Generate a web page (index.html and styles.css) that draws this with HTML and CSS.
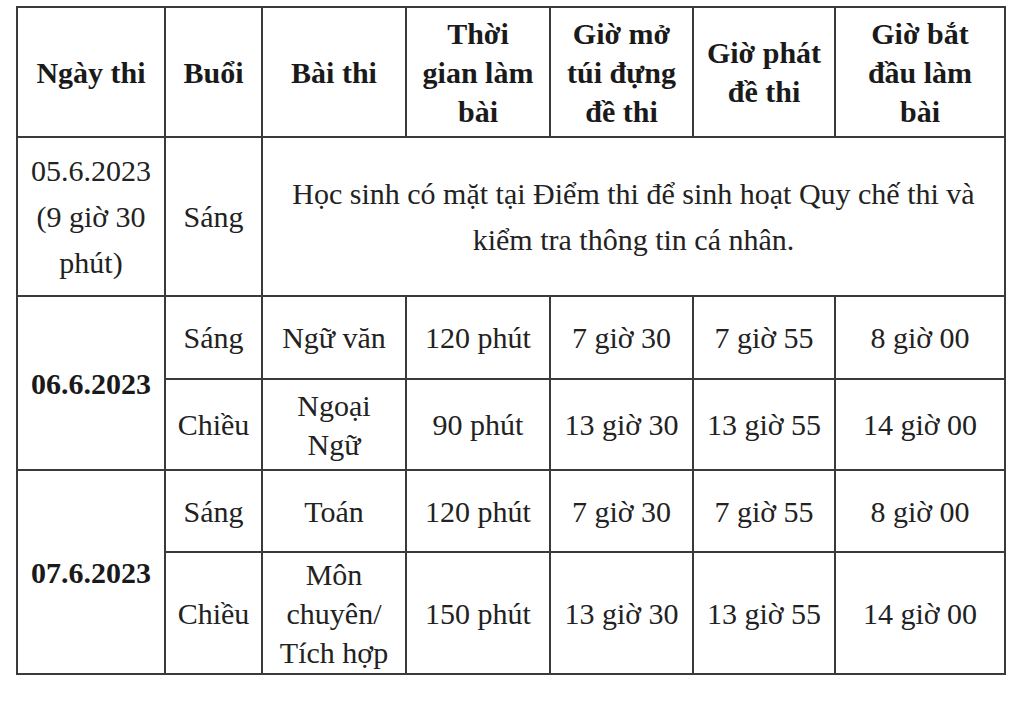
FILE: index.html
```html
<!DOCTYPE html>
<html lang="vi">
<head>
<meta charset="utf-8">
<title>Lịch thi</title>
<link rel="stylesheet" href="styles.css">
</head>
<body>
<table class="schedule">
  <colgroup>
    <col class="c1"><col class="c2"><col class="c3"><col class="c4"><col class="c5"><col class="c6"><col class="c7">
  </colgroup>
  <thead>
    <tr class="r-head">
      <th>Ngày thi</th>
      <th>Buổi</th>
      <th>Bài thi</th>
      <th>Thời<br>gian làm<br>bài</th>
      <th>Giờ mở<br>túi đựng<br>đề thi</th>
      <th>Giờ phát<br>đề thi</th>
      <th>Giờ bắt<br>đầu làm<br>bài</th>
    </tr>
  </thead>
  <tbody>
    <tr class="r-intro">
      <td>05.6.2023<br>(9 giờ 30<br>phút)</td>
      <td>Sáng</td>
      <td colspan="5">Học sinh có mặt tại Điểm thi để sinh hoạt Quy chế thi và<br>kiểm tra thông tin cá nhân.</td>
    </tr>
    <tr class="r-a">
      <td rowspan="2" class="date">06.6.2023</td>
      <td>Sáng</td>
      <td>Ngữ văn</td>
      <td>120 phút</td>
      <td>7 giờ 30</td>
      <td>7 giờ 55</td>
      <td>8 giờ 00</td>
    </tr>
    <tr class="r-b">
      <td>Chiều</td>
      <td>Ngoại<br>Ngữ</td>
      <td>90 phút</td>
      <td>13 giờ 30</td>
      <td>13 giờ 55</td>
      <td>14 giờ 00</td>
    </tr>
    <tr class="r-c">
      <td rowspan="2" class="date">07.6.2023</td>
      <td>Sáng</td>
      <td>Toán</td>
      <td>120 phút</td>
      <td>7 giờ 30</td>
      <td>7 giờ 55</td>
      <td>8 giờ 00</td>
    </tr>
    <tr class="r-d">
      <td>Chiều</td>
      <td>Môn<br>chuyên/<br>Tích hợp</td>
      <td>150 phút</td>
      <td>13 giờ 30</td>
      <td>13 giờ 55</td>
      <td>14 giờ 00</td>
    </tr>
  </tbody>
</table>
</body>
</html>
```

FILE: styles.css
```css
html, body {
  margin: 0;
  padding: 0;
  background: #ffffff;
}

body {
  padding: 6px 0 0 16px;
  font-family: "Liberation Serif", "Times New Roman", serif;
  color: #222222;
}

.schedule {
  border-collapse: collapse;
  table-layout: fixed;
  width: 988px;
  font-size: 30px;
  line-height: 39px;
}

.schedule th,
.schedule td {
  border: 2px solid #3a3a3a;
  padding: 0;
  text-align: center;
  vertical-align: middle;
  white-space: nowrap;
}

.schedule th {
  font-weight: bold;
  color: #1a1a1a;
}

.c1 { width: 148px; }
.c2 { width: 97px; }
.c3 { width: 144px; }
.c4 { width: 144px; }
.c5 { width: 143px; }
.c6 { width: 142px; }
.c7 { width: 170px; }

.r-head { height: 130px; }
.r-intro { height: 159px; line-height: 46px; }
.r-a { height: 83px; }
.r-b { height: 91px; }
.r-c { height: 82px; }
.r-d { height: 122px; }

.date {
  font-weight: bold;
  color: #1a1a1a;
}
```
